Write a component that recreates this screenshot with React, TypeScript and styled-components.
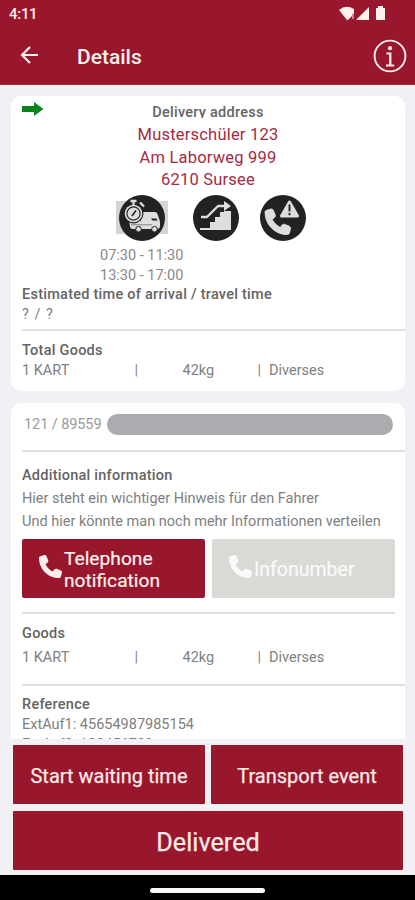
import React from 'react';
import styled, { createGlobalStyle, css } from 'styled-components';

const red = '#99172d';

const GlobalStyle = createGlobalStyle`
  * { box-sizing: border-box; }
  body { margin: 0; background: #f0f0f5; font-family: Roboto, "Liberation Sans", sans-serif; }
  button { font-family: inherit; padding: 0; border: 0; margin: 0; }
`;

const Screen = styled.div`
  width: 415px;
  height: 900px;
  display: flex;
  flex-direction: column;
  overflow: hidden;
  background: #f0f0f5;
`;

const Header = styled.header`
  height: 85px;
  flex: none;
  background: ${red};
  color: #fff0ee;
  border-bottom: 1px solid #a52c36;
`;

const StatusBar = styled.div`
  height: 28px;
  padding: 0 28px 0 9px;
  display: flex;
  align-items: center;
  justify-content: space-between;
  font-size: 15px;
  font-weight: 500;
  letter-spacing: -0.3px;
  svg { margin-top: -2px; }
`;

const TitleBar = styled.div`
  height: 56px;
  display: flex;
  align-items: center;
  padding: 0 8px 0 20px;
`;

const Title = styled.h1`
  flex: 1;
  margin: 1px 0 0 38px;
  font-size: 21px;
  font-weight: 500;
  letter-spacing: 0;
`;

const Content = styled.main`
  height: 654px;
  flex: none;
  padding: 11px 10px 0 11px;
  overflow: hidden;
`;

const Card = styled.section`
  background: #fff;
  border-radius: 10px;
  padding-left: 11px;
  margin-bottom: 12px;
`;

const DeliveryCard = styled(Card)`
  height: 295px;
  padding-top: 5px;
`;

const OrderCard = styled(Card)`
  height: 360px;
  margin-bottom: 0;
`;

const AddressRow = styled.div`
  display: grid;
  grid-template-columns: 22px 1fr 22px;
  margin-right: 11px;
`;

const Address = styled.div`
  display: flex;
  flex-direction: column;
  align-items: center;
`;

const Heading = styled.h2<{ $clip?: boolean; $spacing?: number }>`
  margin: 0;
  font-size: 14.5px;
  font-weight: 500;
  line-height: 20px;
  letter-spacing: ${(p) => p.$spacing ?? 0.25}px;
  color: #646464;
  white-space: nowrap;
  ${(p) => p.$clip && css`
    height: 15px;
    margin: 2px 0 6px;
    overflow: hidden;
  `}
`;

const AddressLine = styled.div`
  font-size: 16.5px;
  line-height: 22.7px;
  letter-spacing: 0.2px;
  color: #a52b42;
`;

const Services = styled.div`
  display: flex;
  height: 48px;
  margin-left: 94px;
  margin-top: 2px;
`;

const Service = styled.svg<{ $gap: number }>`
  flex: none;
  width: 52px;
  height: 48px;
  margin-right: ${(p) => p.$gap}px;
`;

const Times = styled.div`
  margin-left: 78px;
  padding-top: 4px;
  font-size: 14.5px;
  line-height: 19.5px;
  color: #888;
`;

const Line = styled.div<{ $height?: number; $spacing?: number }>`
  font-size: 14.5px;
  line-height: ${(p) => p.$height ?? 20}px;
  letter-spacing: ${(p) => p.$spacing ?? 0}px;
  color: #808080;
  white-space: pre;
`;

const Hints = styled.div`
  padding-top: 1px;
`;

const Divider = styled.div<{ $top: number; $bottom: number; $inset?: boolean }>`
  height: 2px;
  margin: ${(p) => p.$top}px ${(p) => (p.$inset ? 10 : 0)}px ${(p) => p.$bottom}px 0;
  background: #dfdfe0;
`;

const GoodsRow = styled(Line)`
  display: grid;
  grid-template-columns: 112.5px 48px 75px 11.5px 1fr;
`;

const OrderNumber = styled.div`
  display: flex;
  align-items: center;
  height: 42px;
  padding-left: 2px;
  font-size: 14.5px;
  letter-spacing: -0.08px;
  color: #9a9a9a;
`;

const Redacted = styled.div`
  width: 286px;
  height: 21px;
  margin-left: auto;
  margin-right: 12px;
  border-radius: 11px;
  background: #acabaf;
`;

const PhoneButtons = styled.div`
  display: flex;
  gap: 7px;
  margin-top: 5.2px;
`;

const PhoneButton = styled.button<{ $disabled?: boolean }>`
  width: 183px;
  height: 59px;
  display: flex;
  align-items: center;
  padding-left: 17px;
  border-radius: 2px;
  text-align: left;
  font-size: ${(p) => (p.$disabled ? 19.5 : 19.2)}px;
  line-height: 22px;
  color: ${(p) => (p.$disabled ? '#fafafa' : '#fff0ee')};
  background: ${(p) => (p.$disabled ? '#d9dad6' : red)};
  -webkit-text-stroke: 0.2px currentColor;
  svg { flex: none; width: 23px; height: 23px; margin: -5px 2px 0 0; }
  span { padding-top: 2px; }
`;

const Actions = styled.footer`
  flex: none;
  height: 136px;
  padding: 6px 12px 5px 13px;
  display: grid;
  grid-template-columns: 192px 192px;
  grid-template-rows: 59px 59px;
  gap: 7px 6px;
`;

const Action = styled.button<{ $wide?: boolean }>`
  background: ${red};
  color: #fbe9e7;
  border-radius: 1px;
  font-size: ${(p) => (p.$wide ? 25.2 : 20)}px;
  padding-top: 2px;
  -webkit-text-stroke: 0.25px #fbe9e7;
  ${(p) => p.$wide && css`grid-column: 1 / -1; padding-top: 3px;`}
`;

const Navigation = styled.nav`
  flex: 1;
  background: #000;
  display: flex;
  align-items: center;
  justify-content: center;
  padding-top: 5px;
`;

const HomePill = styled.div`
  width: 115px;
  height: 5px;
  border-radius: 3px;
  background: #f8f8f8;
`;

const handset =
  'M164.9 24.6c-7.7-18.6-28-28.5-47.4-23.2l-88 24C12.1 30.2 0 46 0 64c0 247.4 200.6 448 448 448 18 0 33.8-12.1 38.6-29.5l24-88c5.3-19.4-4.6-39.7-23.2-47.4l-96-40c-16.3-6.8-35.2-2.1-46.3 11.6L304.7 368C234.3 334.7 177.3 277.7 144 207.3L193.3 167c13.7-11.2 18.4-30 11.6-46.3z';

const Phone = () => (
  <svg viewBox="0 0 512 512"><path d={handset} fill="currentColor" /></svg>
);

const StatusIcons = () => (
  <svg width="48" height="16" viewBox="0 0 48 16" fill="#fff0ee">
    <path d="M0 5Q7-1 15 4V8L13 9V11L9 15H8Z" />
    <path d="M13 8h2v6h-2z" opacity=".5" />
    <path d="M17 15 30 2V15Z" />
    <path d="M37 3h2V1h5v2h2v12H37Z" />
  </svg>
);

const BackArrow = () => (
  <svg width="19" height="20" viewBox="0 0 19 20" fill="none" stroke="#fff0ee" strokeWidth="2.2">
    <path d="M18 9H2M10 1 2 9l8 8" />
  </svg>
);

const Info = () => (
  <svg width="34" height="34" viewBox="0 0 34 34" fill="none" stroke="#fff0ee">
    <circle cx="17" cy="17" r="15.4" strokeWidth="1.9" />
    <circle cx="17" cy="9.2" r="2.1" fill="#fff0ee" stroke="none" />
    <path d="M13.5 14.5h3.8v12M13 26.5h8.2" strokeWidth="2.2" />
  </svg>
);

const GreenArrow = () => (
  <svg width="22" height="16" viewBox="0 0 22 16">
    <path d="M0 5h12V1l9.5 7L12 15v-4H0Z" fill="#0b831b" />
  </svg>
);

const TimedDelivery = () => (
  <Service $gap={22} viewBox="0 0 52 48">
    <path d="M0 7h52v33H0z" fill="#d4d4d4" />
    <circle cx="26" cy="24" r="23" fill="#222321" />
    <path d="M25 18h14q2 0 2.5 2l2 6q.5 1 .5 3v3q0 3-3 3H17q-3 0-3-3l-1-5h12Z" fill="#dedede" />
    <path d="M35 24.5h5.5l1 2h-5z" fill="#222321" />
    <path d="M15 30.8h21" stroke="#777" strokeWidth=".9" />
    <circle cx="22.5" cy="35.2" r="2.8" fill="#dedede" stroke="#222321" strokeWidth="1" />
    <circle cx="38.5" cy="35.2" r="2.8" fill="#dedede" stroke="#222321" strokeWidth="1" />
    <circle cx="17.5" cy="19.5" r="10" fill="#222321" />
    <circle cx="17.5" cy="19.5" r="8.8" fill="#ddd" />
    <circle cx="17.5" cy="19.5" r="6.6" fill="#ddd" stroke="#222321" strokeWidth="1.2" />
    <path d="M14.5 7h6M17.5 7v4M24 8.5l4 4" stroke="#ddd" strokeWidth="2.3" />
    <path d="m16 22 4-5.5" stroke="#222321" strokeWidth="1.6" />
  </Service>
);

const Stairs = () => (
  <Service $gap={15} viewBox="0 0 52 48">
    <circle cx="26" cy="24" r="23" fill="#222321" />
    <path d="M10 36v-2h10v-6h5v-5h5v-5h4v-1h7v19Z" fill="#dedede" />
    <path d="M11 23h6l11-11h8" fill="none" stroke="#dedede" strokeWidth="2.4" strokeLinejoin="round" />
    <path d="m34 7 7 5-7 5Z" fill="#dedede" />
  </Service>
);

const CallWarning = () => (
  <Service $gap={0} viewBox="0 0 52 48">
    <circle cx="26" cy="24" r="23" fill="#222321" />
    <g transform="translate(8 15) scale(.05)">
      <path d={handset} fill="#dedede" stroke="#dedede" strokeWidth="18" />
    </g>
    <path d="M32.5 8 40.5 22H24.5Z" fill="#dedede" stroke="#dedede" strokeWidth="3" strokeLinejoin="round" />
    <path d="M32.5 10.5v7M32.5 19v2.2" stroke="#222321" strokeWidth="1.9" />
  </Service>
);

const GoodsSpacer = styled.div`
  height: 4px;
`;

const Goods = () => (
  <GoodsRow>
    <span>1 KART</span><span>|</span><span>42kg</span><span>|</span><span>Diverses</span>
  </GoodsRow>
);

export default function App() {
  return (
    <Screen>
      <GlobalStyle />
      <Header>
        <StatusBar>4:11<StatusIcons /></StatusBar>
        <TitleBar><BackArrow /><Title>Details</Title><Info /></TitleBar>
      </Header>
      <Content>
        <DeliveryCard>
          <AddressRow>
            <GreenArrow />
            <Address>
              <Heading $clip>Delivery address</Heading>
              <AddressLine>Musterschüler 123</AddressLine>
              <AddressLine>Am Laborweg 999</AddressLine>
              <AddressLine>6210 Sursee</AddressLine>
            </Address>
          </AddressRow>
          <Services><TimedDelivery /><Stairs /><CallWarning /></Services>
          <Times><div>07:30 - 11:30</div><div>13:30 - 17:00</div></Times>
          <Heading>Estimated time of arrival / travel time</Heading>
          <Line $spacing={1}>? / ?</Line>
          <Divider $top={4} $bottom={10} />
          <Heading>Total Goods</Heading>
          <Goods />
        </DeliveryCard>
        <OrderCard>
          <OrderNumber>121 / 89559<Redacted /></OrderNumber>
          <Divider $top={5} $bottom={14} />
          <Heading>Additional information</Heading>
          <Hints>
            <Line $height={23.4}>Hier steht ein wichtiger Hinweis für den Fahrer</Line>
            <Line $height={23.4}>Und hier könnte man noch mehr Informationen verteilen</Line>
          </Hints>
          <PhoneButtons>
            <PhoneButton><Phone /><span>Telephone<br />notification</span></PhoneButton>
            <PhoneButton $disabled><Phone /><span>Infonumber</span></PhoneButton>
          </PhoneButtons>
          <Divider $top={14} $bottom={10} $inset />
          <Heading>Goods</Heading>
          <GoodsSpacer />
          <Goods />
          <Divider $top={16} $bottom={9} />
          <Heading>Reference</Heading>
          <Line>ExtAuf1: 45654987985154</Line>
          <Line>ExtAuf2: 123456789</Line>
        </OrderCard>
      </Content>
      <Actions>
        <Action>Start waiting time</Action>
        <Action>Transport event</Action>
        <Action $wide>Delivered</Action>
      </Actions>
      <Navigation><HomePill /></Navigation>
    </Screen>
  );
}
